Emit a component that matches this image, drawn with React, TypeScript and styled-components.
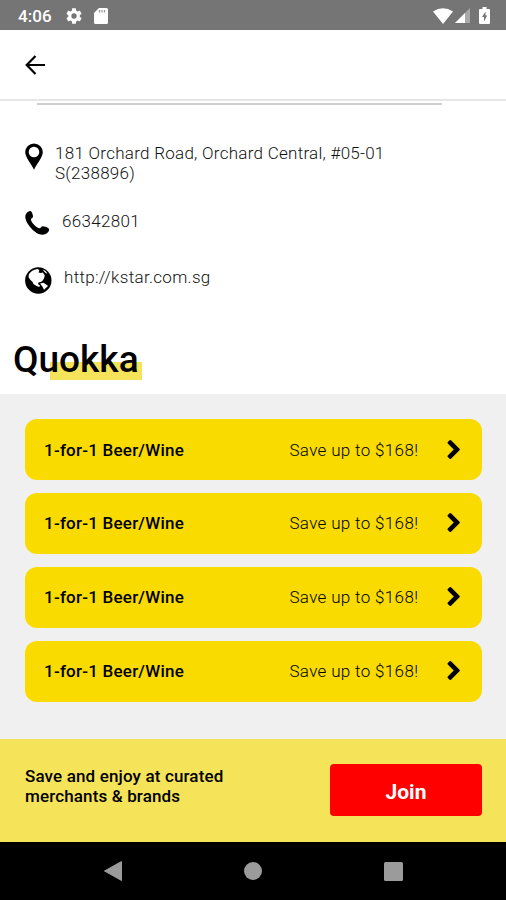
import React from 'react';
import styled, { createGlobalStyle } from 'styled-components';

const GlobalStyle = createGlobalStyle`
  * { box-sizing: border-box; }
  body { margin: 0; font-family: Roboto, 'Liberation Sans', sans-serif; color: #000; background: #fff; }
  svg { display: block; flex: none; }
`;

const Screen = styled.div`
  width: 506px;
  height: 900px;
  display: flex;
  flex-direction: column;
  overflow: hidden;
  background: #fff;
`;

const StatusBar = styled.div`
  height: 30px;
  flex: none;
  display: flex;
  align-items: center;
  padding: 1px 16px 0 18px;
  background: #757575;
  color: #fff;
`;

const Clock = styled.span`
  width: 48px;
  font-size: 17px;
  font-weight: 500;
  letter-spacing: 0.1px;
  line-height: 20px;
`;

const StatusIcons = styled.div<{ $right?: boolean }>`
  display: flex;
  align-items: center;
  gap: ${(p) => (p.$right ? '2px' : '12px')};
  margin-left: ${(p) => (p.$right ? 'auto' : '0')};
`;

const BatteryIcon = styled.svg`
  margin-left: 7px;
`;

const AppBar = styled.header`
  height: 71px;
  flex: none;
  display: flex;
  align-items: center;
  padding: 0 25px;
  border-bottom: 2px solid #e6e6e6;
`;

const Divider = styled.div`
  height: 2px;
  flex: none;
  margin: 2px 64px 0 37px;
  background: #cfcfcf;
`;

const Contacts = styled.div`
  height: 232px;
  flex: none;
  padding: 38px 0 0 25px;
`;

const ContactRow = styled.div<{ $height: number }>`
  height: ${(p) => p.$height}px;
  display: flex;
  align-items: flex-start;
  gap: 12px;
`;

const ContactText = styled.div<{ $spacing: number; $drop?: number }>`
  padding-top: ${(p) => p.$drop ?? 0}px;
  font-size: 17px;
  font-weight: 300;
  line-height: 20px;
  letter-spacing: ${(p) => p.$spacing}px;
  color: #111;
  white-space: pre-line;
`;

const TitleRow = styled.div`
  height: 57px;
  flex: none;
  padding-left: 13px;
`;

const Title = styled.h1`
  display: inline-block;
  margin: 0;
  padding: 1px 5px 0 0;
  font-size: 37px;
  font-weight: 500;
  line-height: 44px;
  background: linear-gradient(#f5e35a, #f5e35a) 37px 25px / 92px 18px no-repeat;
`;

const Offers = styled.section`
  height: 345px;
  flex: none;
  display: flex;
  flex-direction: column;
  gap: 12.900px;
  padding: 25px 24px 0 25px;
  background: #f0f0f0;
`;

const Offer = styled.div`
  height: 61px;
  flex: none;
  display: flex;
  align-items: center;
  padding: 0 20px 0 19px;
  border-radius: 12px;
  background: #f9db00;
`;

const OfferName = styled.span`
  width: 246px;
  font-size: 17px;
  font-weight: 500;
  line-height: 20px;
  letter-spacing: 0.22px;
`;

const OfferValue = styled.span`
  width: 157px;
  font-size: 17px;
  font-weight: 300;
  line-height: 20px;
  letter-spacing: 0.34px;
`;

const JoinBar = styled.div`
  height: 103px;
  flex: none;
  display: flex;
  justify-content: space-between;
  align-items: flex-start;
  padding: 25px 24px 0 25px;
  background: #f5e35a;
`;

const Pitch = styled.p`
  margin: 2px 0 0;
  font-size: 17px;
  font-weight: 500;
  line-height: 20px;
  letter-spacing: 0.14px;
  white-space: pre-line;
`;

const JoinButton = styled.button`
  width: 152px;
  height: 52px;
  padding: 4px 0 0;
  border: 0;
  border-radius: 4px;
  background: #fe0000;
  color: #fff;
  font: 700 21px/24px Roboto, 'Liberation Sans', sans-serif;
`;

const NavBar = styled.nav`
  height: 58px;
  flex: none;
  display: grid;
  grid-template-columns: repeat(3, 140.500px);
  justify-content: center;
  justify-items: center;
  align-items: center;
  background: #000;
`;

const offers = [1, 2, 3, 4].map((id) => ({ id, name: '1-for-1 Beer/Wine', value: 'Save up to $168!' }));

export default function App() {
  return (
    <>
      <GlobalStyle />
      <Screen>
        <StatusBar>
          <Clock>4:06</Clock>
          <StatusIcons>
            <svg width="16" height="16" viewBox="2 2 20 20" fill="#fff">
              <path d="M19.14 12.94c.04-.3.06-.61.06-.94s-.02-.64-.07-.94l2.03-1.58a.49.49 0 0 0 .12-.61l-1.92-3.32a.49.49 0 0 0-.59-.22l-2.39.96a7 7 0 0 0-1.62-.94l-.36-2.54a.48.48 0 0 0-.48-.41h-3.84c-.24 0-.43.17-.47.41l-.36 2.54c-.59.24-1.13.57-1.62.94l-2.39-.96a.48.48 0 0 0-.59.22L2.74 8.87a.48.48 0 0 0 .12.61l2.03 1.58a7 7 0 0 0 0 1.88l-2.03 1.58a.49.49 0 0 0-.12.61l1.92 3.32c.12.22.37.29.59.22l2.39-.96c.5.38 1.03.7 1.62.94l.36 2.54c.05.24.24.41.48.41h3.84c.24 0 .44-.17.47-.41l.36-2.54c.59-.24 1.13-.56 1.62-.94l2.39.96c.22.08.47 0 .59-.22l1.92-3.32a.49.49 0 0 0-.12-.61zM12 15.3a3.3 3.3 0 1 1 0-6.6 3.3 3.3 0 0 1 0 6.6z" />
            </svg>
            <svg width="14" height="16" viewBox="0 0 14 16">
              <path d="M5 0h7.500Q14 0 14 1.500V14.500Q14 16 12.500 16H1.500Q0 16 0 14.500V5z" fill="#fff" />
              <path d="M5.500 2v2.500M8 2v2.500M10.500 2v2.500" stroke="#999" strokeWidth="1.300" />
            </svg>
          </StatusIcons>
          <StatusIcons $right>
            <svg width="20" height="16" viewBox="0 0 20 16">
              <path d="M0 3.500Q10-3 20 3.500L10 16z" fill="#fff" />
            </svg>
            <svg width="15" height="15" viewBox="0 0 15 15">
              <path d="M15 0v15H0z" fill="#a9a9a9" />
              <path d="M10 5v10H0z" fill="#fff" />
            </svg>
            <BatteryIcon width="11" height="17" viewBox="0 0 11 17">
              <path d="M3.500 0h4v2H10q1 0 1 1v13q0 1-1 1H1q-1 0-1-1V3q0-1 1-1h2.500z" fill="#fff" />
              <path d="M6.500 4.500 3 10h2v4.500L8.200 8.500H6.500z" fill="#757575" />
            </BatteryIcon>
          </StatusIcons>
        </StatusBar>

        <AppBar>
          <svg width="21" height="20" viewBox="0 0 21 20" fill="none" stroke="#000" strokeWidth="2.200">
            <path d="M20 10H2.500M10.500 1 1.700 10l8.800 9" />
          </svg>
        </AppBar>
        <Divider />

        <Contacts>
          <ContactRow $height={67}>
            <svg width="18" height="27" viewBox="0 0 18 27">
              <path fillRule="evenodd" d="M9 .5a8.800 8.800 0 0 1 8.800 8.800C17.800 14 12 20.500 9 26.700 6 20.500.2 14 .2 9.300A8.800 8.800 0 0 1 9 .5zM9 3.700a5.300 5.300 0 1 0 0 10.600 5.300 5.300 0 0 0 0-10.600z" />
            </svg>
            <ContactText $spacing={0.27}>{'181 Orchard Road, Orchard Central, #05-01\nS(238896)'}</ContactText>
          </ContactRow>
          <ContactRow $height={56}>
            <svg width="25" height="26" viewBox="0 0 25 26">
              <path d="M1.500 3.200C2.800 1.800 4.500.5 5.800 1.200c1.200.7 2.200 3.300 2.200 5.200 0 1.300-1.300 1.700-2 2.600-.4 1.500 1.500 4.200 3.300 6.100 1.900 1.900 4.300 3.500 5.700 3.100 1-.5 1.400-1.800 2.600-1.900 2 0 5.300 1 6.300 2.400.9 1.500-.5 3.200-1.800 4.300-2.200 1.900-5.200 2.200-8.300.9C9.300 22.200 2.300 15.200.6 8.900 0 6.500.3 4.600 1.500 3.200z" />
            </svg>
            <ContactText $spacing={0.33} $drop={1}>66342801</ContactText>
          </ContactRow>
          <ContactRow $height={40}>
            <svg width="27" height="28" viewBox="0 0 27 28">
              <circle cx="13.300" cy="14.500" r="13.200" />
              <path d="M3.900 8.200C5.500 5.500 8.500 3.500 12.300 2.900L14.300 4l-.7 2.400 2.100.5 2.200-.5 1.900 3.200-.8 2.900-2.100 2.900-3.300 1.200-.6 1.300 2 1.500-.7 1.600-2.700-.9-3.200-2-.8-2.100-2.600-2.500-1.500-2.600z" fill="#fff" />
              <path d="M17.800 3.500l2.700 1.500 1.900 2.600-1.500-.3-1.800-1.800zM15 17.400l3.500-.6 4.100 2.600.2.900-3.800 3.500-1.500-3z" fill="#fff" />
            </svg>
            <ContactText $spacing={0.31} $drop={1}>http://kstar.com.sg</ContactText>
          </ContactRow>
        </Contacts>

        <TitleRow>
          <Title>Quokka</Title>
        </TitleRow>

        <Offers>
          {offers.map((o) => (
            <Offer key={o.id}>
              <OfferName>{o.name}</OfferName>
              <OfferValue>{o.value}</OfferValue>
              <svg width="16" height="24" viewBox="0 0 16 24">
                <path
                  d="M4.300 3 12.800 11.500 4.300 20 2.500 18.200 9.200 11.500 2.500 4.800z"
                  stroke="#000"
                  strokeWidth="2"
                  strokeLinejoin="round"
                />
              </svg>
            </Offer>
          ))}
        </Offers>

        <JoinBar>
          <Pitch>{'Save and enjoy at curated\nmerchants & brands'}</Pitch>
          <JoinButton>Join</JoinButton>
        </JoinBar>

        <NavBar>
          <svg width="18" height="20" viewBox="0 0 18 20">
            <path d="M17.500.5v19L.5 10z" fill="#9b9b9b" stroke="#9b9b9b" strokeLinejoin="round" />
          </svg>
          <svg width="18" height="18" viewBox="0 0 18 18">
            <circle cx="9" cy="9" r="9" fill="#9b9b9b" />
          </svg>
          <svg width="19" height="19" viewBox="0 0 19 19">
            <rect width="19" height="19" rx="1.500" fill="#9b9b9b" />
          </svg>
        </NavBar>
      </Screen>
    </>
  );
}
